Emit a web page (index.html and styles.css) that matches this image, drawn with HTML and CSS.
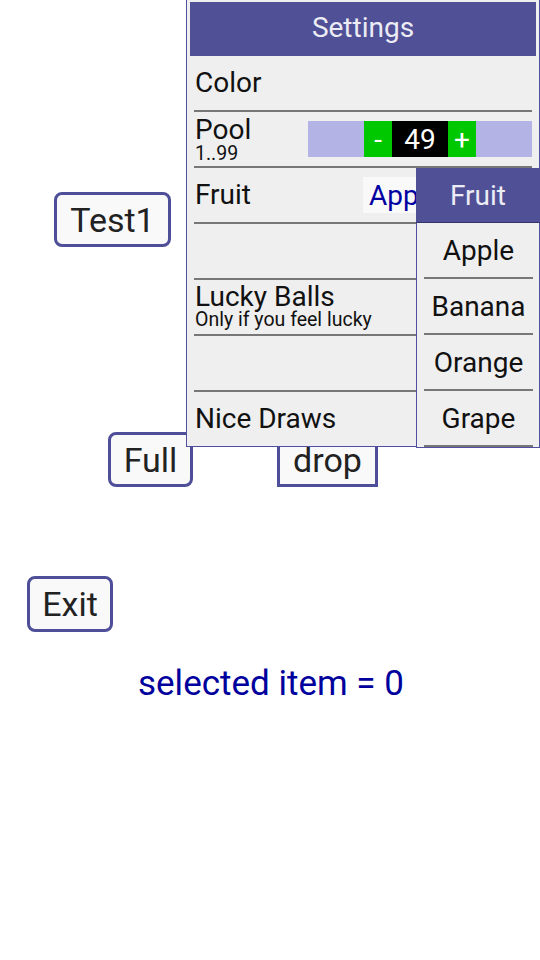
FILE: index.html
```html
<!DOCTYPE html>
<html>
<head>
<meta charset="utf-8">
<link rel="stylesheet" href="styles.css">
</head>
<body>
<div class="screen">
  <div class="canvas">
    <div class="line line-1"><div class="btn btn-test">Test1</div></div>
    <div class="line line-2"><div class="btn btn-full">Full</div><div class="btn btn-drop">drop</div></div>
    <div class="line line-3"><div class="btn btn-exit">Exit</div></div>
    <div class="status">selected item = 0</div>
  </div>

  <div class="settings">
    <div class="settings-head">Settings</div>
    <div class="srow"><span class="lbl">Color</span></div>
    <div class="srow">
      <div class="lbl-stack lbl-stack-pool"><span class="lbl lbl-tight">Pool</span><span class="sub sub-pool">1..99</span></div>
      <div class="spinner">
        <span class="spin-btn">-</span><span class="spin-val">49</span><span class="spin-btn">+</span>
      </div>
    </div>
    <div class="srow">
      <span class="lbl lbl-fixed">Fruit</span>
      <span class="value-box">Apple</span>
    </div>
    <div class="srow"></div>
    <div class="srow">
      <div class="lbl-stack"><span class="lbl lbl-tight">Lucky Balls</span><span class="sub">Only if you feel lucky</span></div>
    </div>
    <div class="srow"></div>
    <div class="srow srow-last"><span class="lbl">Nice Draws</span></div>
  </div>

  <div class="dropdown">
    <div class="dd-head">Fruit</div>
    <div class="dd-item">Apple</div>
    <div class="dd-item">Banana</div>
    <div class="dd-item">Orange</div>
    <div class="dd-item">Grape</div>
  </div>
</div>
</body>
</html>
```

FILE: styles.css
```css
html, body {
  margin: 0;
  padding: 0;
  background: #ffffff;
}

body {
  font-family: Roboto, "Noto Sans", sans-serif;
}

.screen {
  position: relative;
  width: 540px;
  height: 960px;
  overflow: hidden;
  background: #ffffff;
}

.canvas {
  padding-top: 192px;
}

.line {
  display: flex;
}

.line-1 {
  padding-left: 54px;
}

.line-2 {
  margin-top: 185px;
  padding-left: 108px;
  gap: 84px;
}

.line-3 {
  margin-top: 89px;
  padding-left: 27px;
}

.btn {
  box-sizing: border-box;
  display: flex;
  align-items: center;
  justify-content: center;
  border: 3px solid #4f4f99;
  border-radius: 8px;
  background: #f9f9f9;
  color: #222222;
  font-size: 34px;
  line-height: 40px;
  height: 55px;
}

.btn-test { width: 117px; }
.btn-full { width: 85px; }
.btn-drop { width: 101px; border-radius: 0; }
.btn-exit { width: 86px; height: 56px; }

.status {
  margin-top: 31px;
  padding-left: 138px;
  font-size: 35px;
  line-height: 42px;
  color: #00009c;
}

/* settings popup */
.settings {
  position: absolute;
  left: 186px;
  top: 0;
  width: 354px;
  box-sizing: border-box;
  padding: 2px 3px 0;
  background: #efefef;
  border: 1px solid #5050a0;
  border-top: none;
}

.settings-head {
  height: 54px;
  background: #505096;
  color: #ececf4;
  font-size: 28px;
  line-height: 32px;
  padding-bottom: 3px;
  box-sizing: border-box;
  display: flex;
  align-items: center;
  justify-content: center;
}

.srow {
  box-sizing: border-box;
  height: 56px;
  margin: 0 4px;
  padding-left: 1px;
  border-bottom: 2px solid #777777;
  display: flex;
  align-items: center;
}

.srow-last {
  height: 54px;
  border-bottom: none;
}

.lbl {
  font-size: 28px;
  color: #111111;
  line-height: 32px;
}

.lbl-fixed {
  width: 168px;
}

.lbl-stack {
  display: flex;
  flex-direction: column;
}

.lbl-stack-pool {
  padding-top: 3px;
}

.lbl-tight {
  line-height: 26px;
}

.sub {
  font-size: 19.5px;
  line-height: 20px;
  color: #111111;
}

.sub-pool {
  line-height: 22px;
}

.spinner {
  margin-left: auto;
  width: 224px;
  height: 36px;
  background: #b3b3e6;
  display: flex;
  justify-content: center;
}

.spin-btn {
  width: 28px;
  background: #00c800;
  color: #ffffff;
  font-size: 28px;
  display: flex;
  align-items: center;
  justify-content: center;
}

.spin-val {
  width: 56px;
  background: #000000;
  color: #ffffff;
  font-size: 28px;
  display: flex;
  align-items: center;
  justify-content: center;
}

.value-box {
  height: 36px;
  padding: 0 6px;
  background: #f9f9f9;
  color: #0000a0;
  font-size: 28px;
  display: flex;
  align-items: center;
}

/* dropdown list */
.dropdown {
  position: absolute;
  left: 416px;
  top: 168px;
  width: 124px;
  box-sizing: border-box;
  background: #efefef;
  border: 1px solid #5050a0;
  border-top: none;
}

.dd-head {
  height: 54px;
  margin: 0 -1px;
  background: #505096;
  border-bottom: 1px solid #34346a;
  color: #ececf4;
  font-size: 28px;
  display: flex;
  align-items: center;
  justify-content: center;
}

.dd-item {
  box-sizing: border-box;
  height: 56px;
  margin: 0 6px 0 7px;
  border-bottom: 2px solid #777777;
  color: #111111;
  font-size: 28px;
  display: flex;
  align-items: center;
  justify-content: center;
}
```
